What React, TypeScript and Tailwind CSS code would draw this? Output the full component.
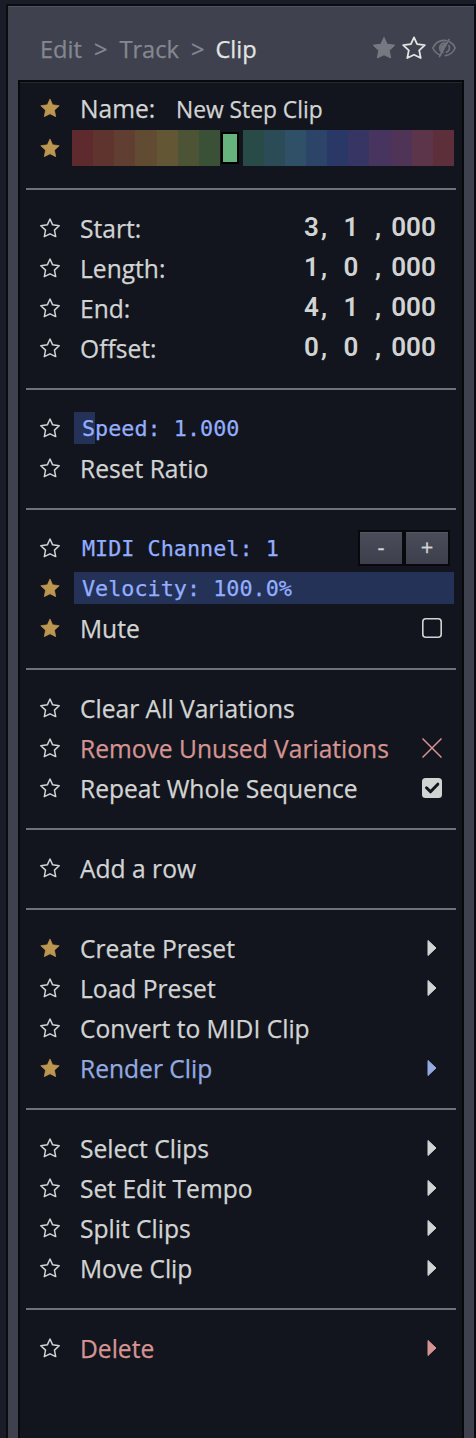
import React from "react";

type Tone = "normal" | "danger" | "accent";
const tones: Record<Tone, string> = {
  normal: "text-[#d2d4d4]",
  danger: "text-[#d59492]",
  accent: "text-[#94aae0]",
};

const STAR = "M12 1.4 15.1 8.2 22.8 9.2 17.2 14.4 18.7 22 12 18.7 5.3 22 6.8 14.4 1.2 9.2 8.9 8.2Z";

function Star({ filled = false }: { filled?: boolean }) {
  return (
    <div className="flex h-10 w-5 shrink-0 items-center pb-[1.5px]">
      <svg width="20" height="20" viewBox="0.3 0.2 23.4 23.4" className={filled ? "text-[#bd9750]" : "text-[#d2d4d4]"}>
        <path d={STAR} fill={filled ? "currentColor" : "none"} stroke="currentColor" strokeWidth={filled ? 0.8 : 1.7} strokeLinejoin="round" />
      </svg>
    </div>
  );
}

const labelText = "ml-5 text-[24.6px] leading-[38px] whitespace-nowrap [-webkit-text-stroke:0.25px_currentColor]";

function Row({ label, starred, tone = "normal", children }: { label: string; starred?: boolean; tone?: Tone; children?: React.ReactNode }) {
  return (
    <div className="flex h-10 items-center pr-5 pl-5">
      <Star filled={starred} />
      <span className={`${labelText} ${tones[tone]}`}>{label}</span>
      <div className={`ml-auto flex items-center ${tones[tone]}`}>{children}</div>
    </div>
  );
}

function Divider() {
  return (
    <div className="flex h-10 items-center px-1.5">
      <div className="h-0.5 w-full bg-[#6f7177]" />
    </div>
  );
}

function Arrow() {
  return (
    <svg width="20" height="20" viewBox="0 0 20 20" className="mb-0.5">
      <path d="M6 2.5 14 10 6 17.5Z" fill="currentColor" stroke="currentColor" strokeWidth="1" strokeLinejoin="round" />
    </svg>
  );
}

function Time({ label, bar, beat }: { label: string; bar: string; beat: string }) {
  return (
    <div className="flex h-10 items-center pr-[25px] pl-5">
      <Star />
      <span className={`${labelText} text-[#d2d4d4]`}>{label}</span>
      <div className="mb-1 ml-auto flex font-['Roboto'] text-[26px] leading-9 font-semibold text-[#d2d4d4]">
        <span className="w-[19px] text-center">{bar}</span>
        <span className="w-3">,</span>
        <span className="w-9 text-center">{beat}</span>
        <span className="w-[21px] pl-1.5">,</span>
        <span className="w-[47px] text-center">000</span>
      </div>
    </div>
  );
}

function Field({ text, starred, fill, children }: { text: string; starred?: boolean; fill: string; children?: React.ReactNode }) {
  return (
    <div className="flex h-10 items-center pl-5">
      <Star filled={starred} />
      <div className={`mb-0.5 ml-3.5 flex h-8 w-[380px] items-center bg-[linear-gradient(#243258,#243258)] bg-no-repeat pl-2 ${fill}`}>
        <span className="mt-0.5 font-['DejaVu_Sans_Mono',monospace] text-[21.8px] leading-8 whitespace-pre text-[#93aeff] [-webkit-text-stroke:0.25px_currentColor]">{text}</span>
        {children}
      </div>
    </div>
  );
}

const swatches = [
  "bg-[#5e2a2d]", "bg-[#5f342f]", "bg-[#603f32]", "bg-[#624b33]", "bg-[#635634]", "bg-[#4d5335]",
  "bg-[#3a5137]", "selected", "bg-[#294b47]", "bg-[#2b4c57]", "bg-[#305068]", "bg-[#2c4468]",
  "bg-[#293866]", "bg-[#373564]", "bg-[#47345f]", "bg-[#503457]", "bg-[#5c354b]", "bg-[#5d2f3a]",
];

function Step({ children }: { children: string }) {
  return (
    <div className="flex h-8 w-[42px] items-center justify-center border-t border-[#535764] bg-linear-to-b from-[#494d59] to-[#3d404c] pb-1.5 text-[22px] leading-none text-[#d2d4d4] [-webkit-text-stroke:0.25px_currentColor]">
      {children}
    </div>
  );
}

export default function App() {
  return (
    <div className="h-[1438px] w-[476px] overflow-hidden bg-[#1a1d28] pt-1 pl-1.5 font-['Open_Sans',sans-serif]">
      <div className="h-full border-2 border-b-0 border-[#0b0c10] bg-[#3f424e]">
        <div className="h-full border-t border-[#505460] px-2.5">
          <header className="flex h-[73px] items-center pt-3 pr-2 pl-[22px] text-[23.6px] text-[#858790] [-webkit-text-stroke:0.25px_currentColor]">
            <span>Edit</span>
            <span className="ml-3">&gt;</span>
            <span className="ml-3">Track</span>
            <span className="ml-3">&gt;</span>
            <span className="ml-[11px] text-[#e2e4e4]">Clip</span>
            <div className="mb-1 ml-auto flex items-center gap-1.5">
              <svg width="24" height="24" viewBox="0 0 24 24" className="text-[#777982]">
                <path d={STAR} fill="currentColor" stroke="currentColor" strokeWidth="1" strokeLinejoin="round" />
              </svg>
              <svg width="24" height="24" viewBox="0 0 24 24" className="text-[#e2e4e4]">
                <path d={STAR} fill="none" stroke="currentColor" strokeWidth="1.8" strokeLinejoin="round" />
              </svg>
              <svg width="24" height="20" viewBox="0 0 24 20" fill="none" stroke="#70737c" strokeWidth="1.6" strokeLinecap="round">
                <path d="M8.5 17C5 16 2.5 13.5.8 10 3 5.5 7 2.4 12 2.4l2.5.2M17.5 3.8C20 5 22 7.2 23.2 10c-2 4.2-5.3 7-9.8 7.6" />
                <path d="M17 1.5 7.5 18.5" />
                <path d="M11 14.5C6.5 13 6.5 6.5 11.5 5L14 5.5M17 7.5c1 3-.2 5.7-2.5 6.8" />
                <path d="M9 8.5 13.5 6 9.5 13Z" fill="#70737c" />
              </svg>
            </div>
          </header>
          <main className="h-[1400px] w-[446px] border-2 border-[#08090d] bg-[#12151d]">
            <div className="border-t border-[#24272f] pt-1.5">
              <Row label="Name:" starred>
                <span className="mt-0.5 w-[266px] text-[22.8px] leading-[38px] [-webkit-text-stroke:0.25px_currentColor]">New Step Clip</span>
              </Row>
              <div className="flex h-10 items-center pl-5">
                <Star filled />
                <div className="mb-0.5 ml-3 flex h-9 w-[382px]">
                  {swatches.map((c) =>
                    c === "selected" ? (
                      <div key={c} className="flex-1 py-0.5 pl-[1.5px]">
                        <div className="h-8 w-[18px] border-2 border-black bg-[#67b37d]" />
                      </div>
                    ) : (
                      <div key={c} className={`flex-1 ${c}`} />
                    ),
                  )}
                </div>
              </div>
              <Divider />
              <Time label="Start:" bar="3" beat="1" />
              <Time label="Length:" bar="1" beat="0" />
              <Time label="End:" bar="4" beat="1" />
              <Time label="Offset:" bar="0" beat="0" />
              <Divider />
              <Field text="Speed: 1.000" fill="bg-size-[21px_100%]" />
              <Row label="Reset Ratio" />
              <Divider />
              <Field text="MIDI Channel: 1" fill="bg-size-[0px_100%]">
                <div className="mr-1 ml-auto flex gap-1 bg-[#08090d] p-0.5">
                  <Step>-</Step>
                  <Step>+</Step>
                </div>
              </Field>
              <Field text="Velocity: 100.0%" starred fill="bg-size-[100%_100%]" />
              <Row label="Mute" starred>
                <svg width="20" height="20" viewBox="0 0 20 20" className="mb-0.5">
                  <rect x="0.8" y="0.8" width="18.4" height="18.4" rx="3" fill="none" stroke="currentColor" strokeWidth="1.6" />
                </svg>
              </Row>
              <Divider />
              <Row label="Clear All Variations" />
              <Row label="Remove Unused Variations" tone="danger">
                <svg width="20" height="20" viewBox="0 0 20 20" className="mb-0.5">
                  <path d="M.5.5l19 19M19.5.5l-19 19" stroke="currentColor" strokeWidth="1.5" />
                </svg>
              </Row>
              <Row label="Repeat Whole Sequence">
                <svg width="20" height="20" viewBox="0 0 20 20" className="mb-0.5">
                  <rect width="20" height="20" rx="3.5" fill="currentColor" />
                  <path d="M4.5 9.8 8.5 13.8 15.8 6.2" fill="none" stroke="#12151d" strokeWidth="3" strokeLinecap="round" strokeLinejoin="round" />
                </svg>
              </Row>
              <Divider />
              <Row label="Add a row" />
              <Divider />
              <Row label="Create Preset" starred><Arrow /></Row>
              <Row label="Load Preset"><Arrow /></Row>
              <Row label="Convert to MIDI Clip" />
              <Row label="Render Clip" starred tone="accent"><Arrow /></Row>
              <Divider />
              <Row label="Select Clips"><Arrow /></Row>
              <Row label="Set Edit Tempo"><Arrow /></Row>
              <Row label="Split Clips"><Arrow /></Row>
              <Row label="Move Clip"><Arrow /></Row>
              <Divider />
              <Row label="Delete" tone="danger"><Arrow /></Row>
            </div>
          </main>
        </div>
      </div>
    </div>
  );
}
